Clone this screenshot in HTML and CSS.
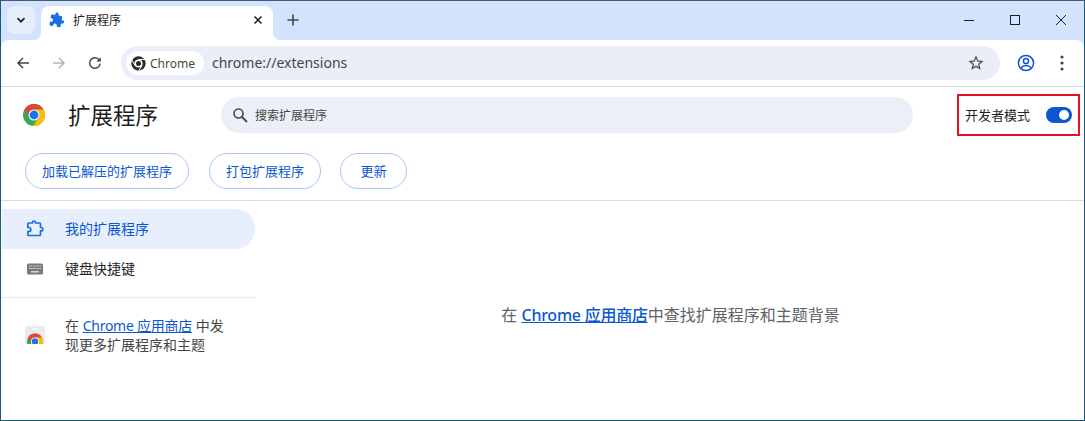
FILE: index.html
```html
<!DOCTYPE html>
<html lang="zh-CN">

<head>
    <meta charset="UTF-8">
    <meta name="viewport" content="width=device-width, initial-scale=1.0">
    <title>扩展程序</title>
    <link rel="stylesheet" href="styles.css">
</head>

<body>
    <div class="window">
        <div class="tabstrip">
            <div class="tab-search">
                <svg width="12" height="12" viewBox="0 0 12 12"><path d="M2.5 4.2 6 7.7l3.5-3.5" fill="none" stroke="#1f1f1f" stroke-width="1.7"/></svg>
            </div>
            <div class="tab">
                <svg class="tab-icon" width="16" height="16" viewBox="0 0 24 24"><path fill="#1a6fe3" d="M20.5 11H19V7c0-1.1-.9-2-2-2h-4V3.5C13 2.12 11.88 1 10.5 1S8 2.12 8 3.5V5H4c-1.1 0-1.99.9-1.99 2v3.8H3.5c1.49 0 2.7 1.21 2.7 2.7s-1.21 2.7-2.7 2.7H2V20c0 1.1.9 2 2 2h3.8v-1.5c0-1.49 1.21-2.7 2.7-2.7 1.49 0 2.7 1.21 2.7 2.7V22H17c1.1 0 2-.9 2-2v-4h1.5c1.38 0 2.5-1.12 2.5-2.5S21.88 11 20.5 11z"/></svg>
                <span class="tab-title">扩展程序</span>
                <svg width="10" height="10" viewBox="0 0 10 10"><path d="M1.5 1.5l7 7M8.5 1.5l-7 7" stroke="#1f1f1f" stroke-width="1.5"/></svg>
            </div>
            <svg class="new-tab" width="12" height="12" viewBox="0 0 12 12"><path d="M6 .5v11M.5 6h11" stroke="#444746" stroke-width="1.6"/></svg>
            <div class="win-controls">
                <svg width="12" height="12" viewBox="0 0 12 12"><path d="M1 6.5h10" stroke="#1f1f1f" stroke-width="1"/></svg>
                <svg width="12" height="12" viewBox="0 0 12 12"><rect x="1.5" y="1.5" width="9" height="9" fill="none" stroke="#1f1f1f" stroke-width="1"/></svg>
                <svg width="12" height="12" viewBox="0 0 12 12"><path d="M1 1l10 10M11 1L1 11" stroke="#1f1f1f" stroke-width="1"/></svg>
            </div>
        </div>

        <div class="toolbar">
            <svg class="nav-btn" width="16" height="16" viewBox="0 0 16 16"><path d="M14 8H3M8 3 3 8l5 5" fill="none" stroke="#444746" stroke-width="1.5"/></svg>
            <svg class="nav-btn" width="16" height="16" viewBox="0 0 16 16"><path d="M2 8h11M8 3l5 5-5 5" fill="none" stroke="#b4b6b8" stroke-width="1.5"/></svg>
            <svg class="nav-btn" width="16" height="16" viewBox="0 0 16 16"><path d="M13.2 8.6A5.3 5.3 0 1 1 11.7 4.2L13.4 6" fill="none" stroke="#444746" stroke-width="1.5"/><path d="M13.8 2.2v4.4H9.4z" fill="#444746"/></svg>
            <div class="omnibox">
                <div class="chip">
                    <svg width="15" height="15" viewBox="0 0 24 24">
                        <circle cx="12" cy="12" r="11.500" fill="#26282b"/>
                        <circle cx="12" cy="12" r="6.500" fill="#fff"/>
                        <circle cx="12" cy="12" r="4" fill="#26282b"/>
                        <path d="M12 5.500h11M6.400 15.200.8 5.500M17.600 15.200 12 24.500" stroke="#fff" stroke-width="1.600"/>
                    </svg>
                    <span>Chrome</span>
                </div>
                <span class="url">chrome://extensions</span>
                <svg class="star" width="18" height="18" viewBox="0 0 24 24"><path fill="#444746" d="M22 9.24l-7.19-.62L12 2 9.19 8.63 2 9.24l5.46 4.73L5.82 21 12 17.27 18.18 21l-1.63-7.03L22 9.24zM12 15.4l-3.76 2.27 1-4.28-3.32-2.88 4.38-.38L12 6.1l1.71 4.04 4.38.38-3.32 2.88 1 4.28L12 15.4z"/></svg>
            </div>
            <svg class="profile" width="18" height="18" viewBox="0 0 18 18">
                <circle cx="9" cy="9" r="7.6" fill="none" stroke="#0b57d0" stroke-width="1.5"/>
                <circle cx="9" cy="7" r="2.6" fill="none" stroke="#0b57d0" stroke-width="1.5"/>
                <path d="M3.8 14c1.4-1.8 3.2-2.4 5.2-2.4s3.800.6 5.200 2.400" fill="none" stroke="#0b57d0" stroke-width="1.5"/>
            </svg>
            <svg class="menu" width="4" height="16" viewBox="0 0 4 16"><circle cx="2" cy="2" r="1.6" fill="#444746"/><circle cx="2" cy="8" r="1.600" fill="#444746"/><circle cx="2" cy="14" r="1.600" fill="#444746"/></svg>
        </div>

        <div class="page-head">
            <svg class="logo" width="22" height="22" viewBox="2 2 20 20">
                <circle cx="12" cy="12" r="10" fill="#34a853"/>
                <path d="M3.340 7A10 10 0 0 1 20.660 7H12A5 5 0 0 0 7.670 14.500Z" fill="#ea4335"/>
                <path d="M20.660 7A10 10 0 0 1 11 22L16.330 14.500A5 5 0 0 0 12 7Z" fill="#fbbc04"/>
                <circle cx="12" cy="12" r="5" fill="#fff"/>
                <circle cx="12" cy="12" r="4" fill="#1a73e8"/>
            </svg>
            <h1>扩展程序</h1>
            <div class="search">
                <svg width="16" height="16" viewBox="0 0 16 16"><circle cx="6.500" cy="6.500" r="4.500" fill="none" stroke="#444746" stroke-width="1.600"/><path d="M10 10l5 5" stroke="#444746" stroke-width="1.800"/></svg>
                <span>搜索扩展程序</span>
            </div>
            <div class="dev-mode">
                <span class="dev-label">开发者模式</span>
                <div class="toggle"><div class="knob"></div></div>
            </div>
        </div>

        <div class="actions">
            <button class="pill">加载已解压的扩展程序</button>
            <button class="pill">打包扩展程序</button>
            <button class="pill pill-update">更新</button>
        </div>

        <div class="main">
            <div class="sidebar">
                <div class="side-item active">
                    <svg width="18" height="18" viewBox="0 0 18 18"><path fill="none" stroke="#1a6fe3" stroke-width="1.700" stroke-linejoin="round" d="M2.800 3H6.500V2.500a1.500 1.500 0 0 1 3 0V3h4a1 1 0 0 1 1 1v3.500h.6a1.700 1.700 0 0 1 0 3.400h-.6V14.500a1 1 0 0 1-1 1H2.800a1 1 0 0 1-1-1V11.500h1a2 2 0 0 0 0-4h-1V4a1 1 0 0 1 1-1z"/></svg>
                    <span class="side-label">我的扩展程序</span>
                </div>
                <div class="side-item">
                    <svg width="18" height="18" viewBox="0 0 18 18"><rect x="1" y="3.500" width="16" height="11" rx="1.500" fill="#77797b"/><path d="M3 6h12M3 8.500h12" stroke="#e6e6e6" stroke-width="1.200" stroke-dasharray="1.300 .800"/><path d="M5 11.800h8" stroke="#e6e6e6" stroke-width="1.300"/></svg>
                    <span class="side-label">键盘快捷键</span>
                </div>
                <div class="side-rule"></div>
                <div class="store-promo">
                    <svg class="store-icon" width="20" height="18" viewBox="0 0 20 18">
                        <rect width="20" height="18" rx="1" fill="#e8eaed"/>
                        <path d="M7 3h6" stroke="#fff" stroke-width="1.200"/>
                        <circle cx="10" cy="15.500" r="8" fill="#34a853"/>
                        <path d="M3.070 11.500A8 8 0 0 1 16.930 11.500H10L6.500 17.500z" fill="#ea4335"/>
                        <path d="M16.930 11.500A8 8 0 0 1 10 23.500L13.500 17.500 10 11.500z" fill="#fbbc04"/>
                        <circle cx="10" cy="15.500" r="4" fill="#fff"/>
                        <circle cx="10" cy="15.500" r="3.200" fill="#1a73e8"/>
                    </svg>
                    <div class="store-text">
                        <p>在 <a href="#">Chrome 应用商店</a> 中发</p>
                        <p>现更多扩展程序和主题</p>
                    </div>
                </div>
            </div>
            <div class="empty">
                <p>在 <a href="#">Chrome 应用商店</a>中查找扩展程序和主题背景</p>
            </div>
        </div>
    </div>
</body>

</html>
```

FILE: styles.css
```css
* {
    box-sizing: border-box;
}

body {
    margin: 0;
    font-family: "Noto Sans", "Noto Sans CJK SC", sans-serif;
    color: #1f1f1f;
    background-color: #fff;
}

.window {
    width: 1085px;
    height: 421px;
    overflow: hidden;
    display: flex;
    flex-direction: column;
    background-color: #d3e3fd;
    border: 1px solid #1a5a75;
    border-top-color: #4a5a70;
}

/* tab strip */
.tabstrip {
    height: 39px;
    flex: none;
    display: flex;
    align-items: flex-end;
    padding-left: 6px;
}

.tab-search {
    width: 28px;
    height: 28px;
    margin-bottom: 6px;
    border-radius: 8px;
    background-color: #e6eefc;
    display: flex;
    align-items: center;
    justify-content: center;
}

.tab {
    position: relative;
    width: 232px;
    height: 34px;
    margin-left: 6px;
    padding: 0 10px 6px 8px;
    border-radius: 8px 8px 0 0;
    background-color: #fff;
    display: flex;
    align-items: center;
    font-size: 12px;
}

.tab::after {
    content: "";
    position: absolute;
    right: -8px;
    bottom: 0;
    width: 8px;
    height: 8px;
    background: radial-gradient(circle at 100% 0, #d3e3fd 8px, #fff 8.500px);
}

.tab::before {
    content: "";
    position: absolute;
    left: -8px;
    bottom: 0;
    width: 8px;
    height: 8px;
    background: radial-gradient(circle at 0 0, #d3e3fd 8px, #fff 8.500px);
}

.tab-icon {
    transform: rotate(10deg);
}

.tab-title {
    flex: 1;
    margin-left: 8px;
    padding-top: 2px;
    line-height: 18px;
}

.new-tab {
    margin: 0 0 14px 14px;
}

.win-controls {
    margin-left: auto;
    margin-bottom: 14px;
    padding-right: 17px;
    display: flex;
    gap: 34px;
}

/* toolbar */
.toolbar {
    height: 47px;
    flex: none;
    padding: 0 20px 0 14px;
    display: flex;
    align-items: center;
    background-color: #fff;
    border-radius: 8px 8px 0 0;
    border-bottom: 1px solid #dadce0;
}

.nav-btn {
    margin: 0 20px 0 0;
}

.omnibox {
    flex: 1;
    height: 34px;
    margin-left: -2px;
    padding: 0 15px 0 5px;
    border-radius: 17px;
    background-color: #e9eef8;
    display: flex;
    align-items: center;
}

.chip {
    width: 78px;
    height: 24px;
    border-radius: 12px;
    background-color: #fff;
    padding-left: 5px;
    display: flex;
    align-items: center;
    gap: 4px;
    font-size: 12px;
    color: #444746;
}

.url {
    flex: 1;
    margin-left: 8px;
    padding-bottom: 2px;
    font-size: 14px;
    color: #444746;
}

.profile {
    margin-left: 17px;
}

.menu {
    margin-left: 25px;
}

/* extensions page */
.page-head {
    height: 56px;
    flex: none;
    display: flex;
    align-items: center;
    padding-left: 22px;
    background-color: #fff;
}

.logo {
    flex: none;
}

h1 {
    width: 153px;
    margin: 0 0 0 23px;
    padding-top: 2px;
    font-size: 22.500px;
    font-weight: 400;
    line-height: 30px;
}

.search {
    width: 692px;
    height: 36px;
    padding-left: 11px;
    border-radius: 18px;
    background-color: #eceff7;
    display: flex;
    align-items: center;
    gap: 7px;
    font-size: 12px;
    color: #444746;
}

.dev-mode {
    width: 123px;
    height: 42px;
    margin-left: 44px;
    padding: 0 6px;
    border: 2px solid #e81123;
    display: flex;
    align-items: center;
    justify-content: space-between;
    font-size: 13px;
}

.dev-label {
    padding-bottom: 2px;
}

.toggle {
    width: 26px;
    height: 16px;
    padding: 3px;
    border-radius: 8px;
    background-color: #0b57d0;
    display: flex;
    justify-content: flex-end;
}

.knob {
    width: 10px;
    height: 10px;
    border-radius: 50%;
    background-color: #fff;
}

.actions {
    height: 58px;
    flex: none;
    padding: 10px 0 0 24px;
    display: flex;
    align-items: flex-start;
    gap: 20px;
    background-color: #fff;
    border-bottom: 1px solid #dadce0;
}

.pill {
    height: 36px;
    padding: 0 16px 2px;
    border: 1px solid #a8c7fa;
    border-radius: 18px;
    background-color: #fff;
    color: #0b57d0;
    font-family: inherit;
    font-size: 13px;
}

.pill-update {
    margin-left: -1px;
    padding: 0 19.500px 2px;
}

.main {
    flex: 1;
    display: flex;
    background-color: #fff;
}

.sidebar {
    width: 254px;
    flex: none;
    padding-top: 8px;
}

.side-item {
    height: 40px;
    padding-left: 25px;
    display: flex;
    align-items: center;
    gap: 21px;
    font-size: 14px;
}

.side-label {
    padding-bottom: 2px;
}

.side-item.active {
    margin-left: 1px;
    padding-left: 24px;
    border-radius: 0 20px 20px 0;
    background-color: #e7effd;
    color: #0b57d0;
}

.side-rule {
    margin: 8px -1px 0 0;
    border-top: 1px solid #e8eaed;
}

.store-promo {
    padding: 18px 0 0 24px;
    display: flex;
    align-items: center;
    gap: 20px;
    font-size: 14px;
    color: #444746;
}

.store-icon {
    flex: none;
}

.store-text p {
    margin: 0;
    line-height: 19px;
}

a {
    color: #0b57d0;
    letter-spacing: -0.250px;
}

.empty {
    flex: 1;
    padding: 102px 0 0 2px;
    text-align: center;
    font-size: 16px;
    color: #5f6368;
}

.empty p {
    margin: 0;
    line-height: 24px;
}

.empty a {
    font-weight: 500;
}
```
